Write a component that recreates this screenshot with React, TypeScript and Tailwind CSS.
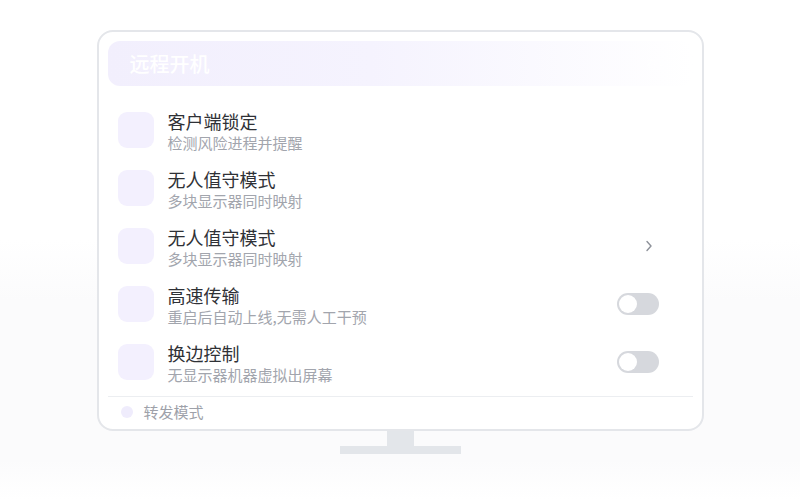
import React from "react";

const rows = [
  { t: "客户端锁定", s: "检测风险进程并提醒", r: "none" },
  { t: "无人值守模式", s: "多块显示器同时映射", r: "none" },
  { t: "无人值守模式", s: "多块显示器同时映射", r: "chevron" },
  { t: "高速传输", s: "重启后自动上线,无需人工干预", r: "toggle" },
  { t: "换边控制", s: "无显示器机器虚拟出屏幕", r: "toggle" },
];

function Toggle() {
  return (
    <div className="w-[42px] h-[22px] rounded-full bg-[#d6d8dd] p-[2px] flex items-center mr-[2px]">
      <div className="w-[18px] h-[18px] rounded-full bg-white" />
    </div>
  );
}

function Chevron() {
  return (
    <svg width="8" height="12" viewBox="0 0 8 12" className="mr-[8px]">
      <path d="M2 1.5 L6 6 L2 10.5" fill="none" stroke="#8d9199" strokeWidth="1.4" strokeLinecap="round" strokeLinejoin="round" />
    </svg>
  );
}

export default function App() {
  return (
    <div
      className="w-[800px] h-[500px] flex flex-col items-center pt-[30px] bg-[linear-gradient(180deg,#ffffff_0%,#ffffff_48%,#fbfbfc_60%,#fbfbfc_92%,#ffffff_100%)]"
      style={{ fontFamily: '"Noto Sans CJK SC", "Noto Sans", sans-serif' }}
    >
      <div className="w-[607px] h-[401px] rounded-[16px] border-2 border-[#e4e6ea] bg-white p-[9px] flex flex-col">
        <div className="h-[45px] rounded-[12px] bg-[linear-gradient(90deg,#f2effd_0%,#f5f3fe_45%,#ffffff_100%)] flex items-center justify-between px-[22px]">
          <span className="text-white text-[20px] leading-none font-medium">远程开机</span>
          <span className="text-white text-[12px] leading-none">在线</span>
        </div>
        <div className="flex flex-col pt-[15px]">
          {rows.map((r, i) => (
            <div key={i} className="h-[58px] flex items-center pl-[10px] pr-[32px]">
              <div className="w-[36px] h-[36px] rounded-[9px] bg-[#f3f0fe] shrink-0" />
              <div className="ml-[14px] flex flex-col flex-1 mt-[3px]">
                <span className="text-[18px] leading-[22px] text-[#2f3136]">{r.t}</span>
                <span className="text-[15px] leading-[21px] text-[#a2a5ad]">{r.s}</span>
              </div>
              {r.r === "toggle" && <Toggle />}
              {r.r === "chevron" && <Chevron />}
            </div>
          ))}
        </div>
        <div className="mt-[5px] border-t border-[#eceef1] flex-1 flex items-center pl-[13px] pt-[6px]">
          <div className="w-[12px] h-[12px] rounded-full bg-[#efecfc]" />
          <span className="ml-[11px] text-[15px] leading-none text-[#9ea1a9]">转发模式</span>
        </div>
      </div>
      <div className="w-[27px] h-[15px] bg-[#e3e6ea]" />
      <div className="w-[121px] h-[8px] bg-[#e3e6ea]" />
    </div>
  );
}
